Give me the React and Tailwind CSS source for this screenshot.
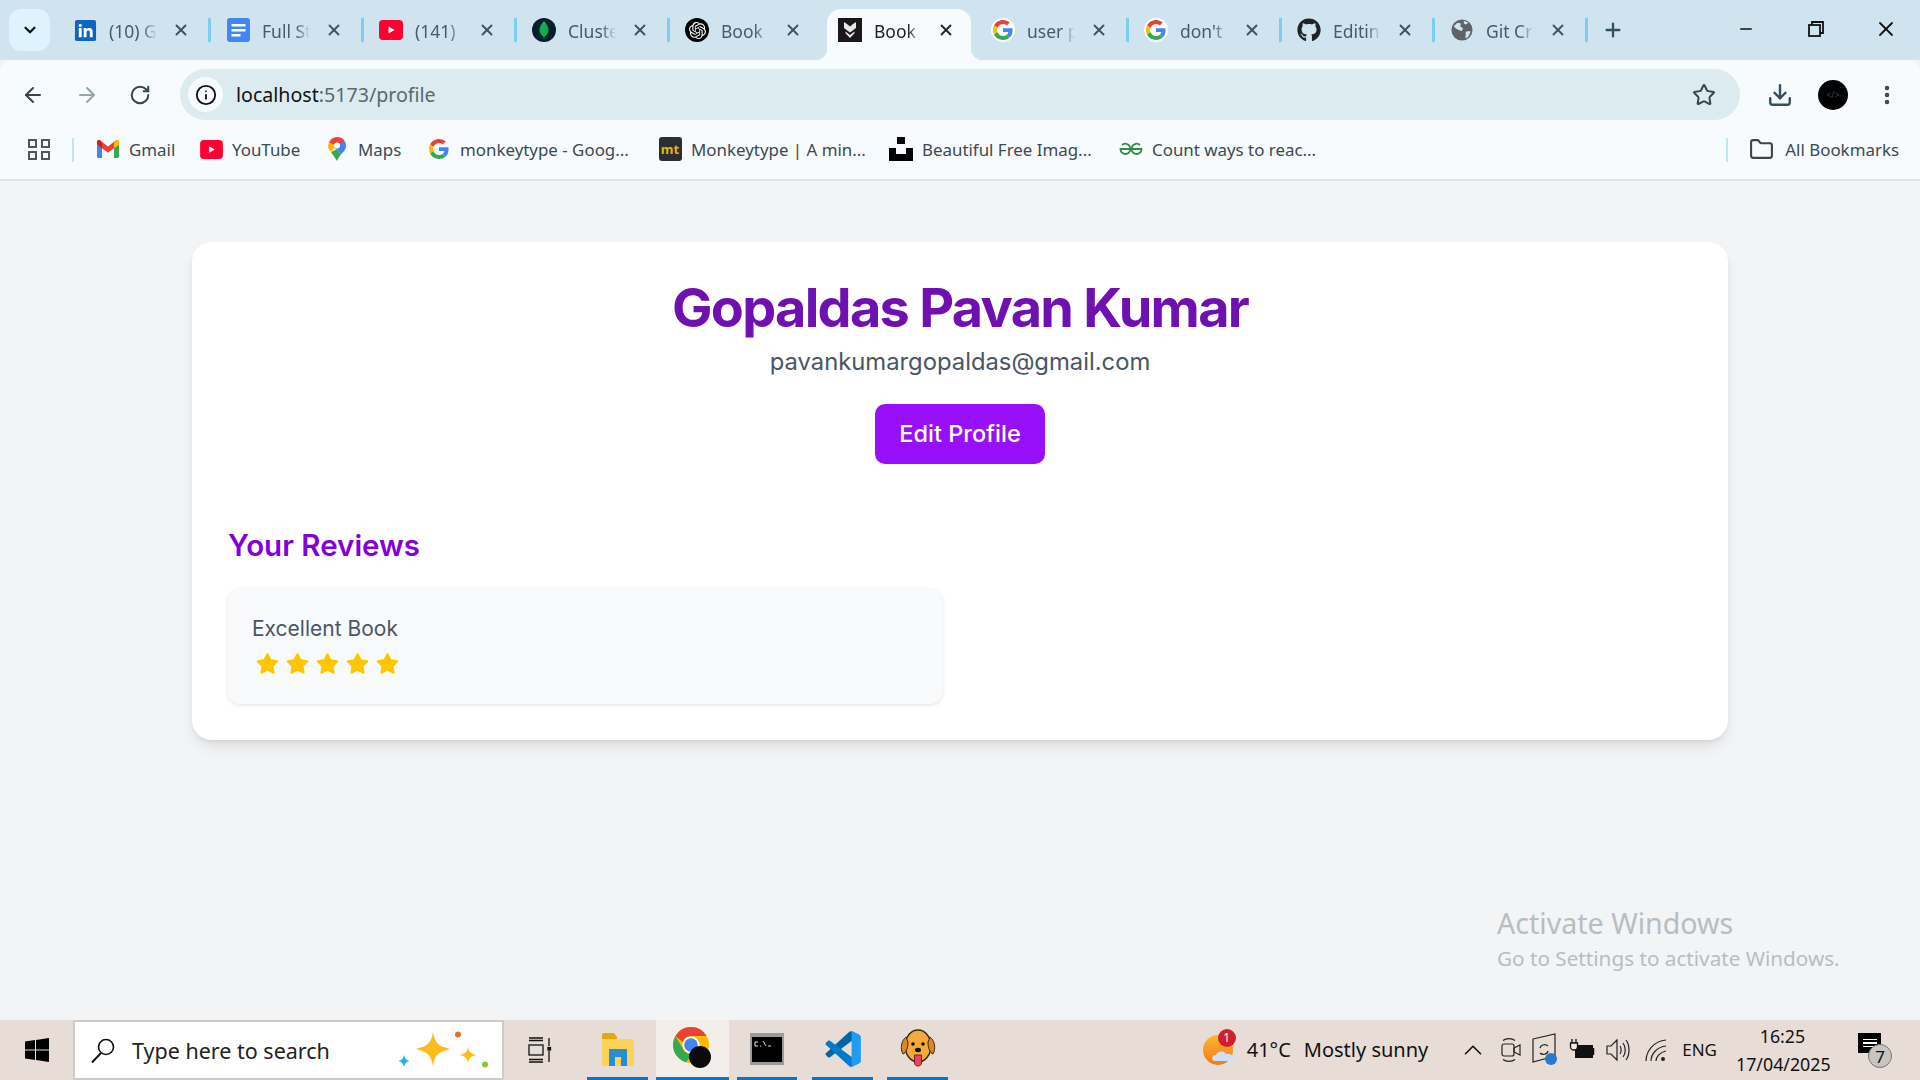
import React from 'react';
import { ArrowLeft, ArrowRight, RotateCw, Info, Star, Download, EllipsisVertical, Plus, X, ChevronDown, ChevronUp, Minus, Folder } from 'lucide-react';
import { FaGithub, FaStar } from 'react-icons/fa';
import { SiOpenai } from 'react-icons/si';

const GoogleG = ({ size = 24 }) => (
    <svg width={size} height={size} viewBox="0 0 48 48">
        <path fill="#EA4335" d="M24 9.5c3.5 0 6.7 1.2 9.2 3.6l6.9-6.9C35.9 2.4 30.5 0 24 0 14.6 0 6.5 5.4 2.6 13.2l8 6.2C12.5 13.6 17.800 9.500 24 9.500z" />
        <path fill="#4285F4" d="M46.900 24.500c0-1.600-.1-3.100-.4-4.500H24v9h12.900c-.6 3-2.200 5.500-4.700 7.200l7.700 6c4.400-4.200 7-10.300 7-17.700z" />
        <path fill="#FBBC05" d="M10.500 28.600c-.5-1.400-.8-3-.8-4.600s.3-3.200.8-4.600l-8-6.200C.9 16.500 0 20.100 0 24s.9 7.500 2.600 10.800l7.900-6.200z" />
        <path fill="#34A853" d="M24 48c6.500 0 11.900-2.100 15.900-5.800l-7.700-6c-2.200 1.400-4.900 2.300-8.200 2.300-6.200 0-11.500-4.200-13.400-9.800l-8 6.200C6.500 42.600 14.600 48 24 48z" />
    </svg>
);

const GoogleBadge = () => (
    <span className="flex w-6 h-6 rounded-full bg-white items-center justify-center">
        <GoogleG size={20} />
    </span>
);

const LinkedInIcon = () => (
    <svg width="23" height="23" viewBox="0 0 24 24">
        <rect x="1" y="1" width="22" height="22" rx="2" fill="#0a66c2" />
        <path fill="#fff" d="M5 9.500h3V19H5zM6.500 5a1.700 1.700 0 1 1 0 3.400 1.700 1.700 0 0 1 0-3.400zM10 9.500h2.900v1.300c.5-.9 1.600-1.500 3-1.500 2.700 0 3.600 1.700 3.600 4.300V19h-3v-4.700c0-1.200-.2-2.400-1.600-2.400s-1.800 1.100-1.800 2.300V19h-3z" />
    </svg>
);

const DocsIcon = () => (
    <svg width="24" height="24" viewBox="0 0 24 24">
        <rect x="1" y="0" width="23" height="24" rx="3" fill="#4285f4" />
        <path fill="#fff" d="M5.500 6h14v2.500h-14zM5.500 11h14v2.500h-14zM5.500 16h9v2.500h-9z" />
    </svg>
);

const YouTubeIcon = ({ w = 24, h = 20 }) => (
    <svg width={w} height={h} viewBox="0 0 24 20">
        <rect width="24" height="20" rx="4" fill="#ff0033" />
        <path fill="#fff" d="M9.500 6.500l6 3.500-6 3.500z" />
    </svg>
);

const MongoIcon = () => (
    <svg width="24" height="24" viewBox="0 0 24 24">
        <circle cx="12" cy="12" r="12" fill="#02212b" />
        <path fill="#13aa52" d="M12 3c2.800 3 4.500 6 4.500 9 0 3.500-2.300 5.500-3.900 6.500l-.3 2.500h-.6l-.3-2.500C9.800 17.500 7.500 15.500 7.500 12c0-3 1.700-6 4.500-9z" />
    </svg>
);

const OpenAiIcon = () => (
    <span className="flex w-6 h-6 rounded-full bg-black items-center justify-center text-white">
        <SiOpenai size={17} />
    </span>
);

const BookIcon = () => (
    <svg width="24" height="24" viewBox="0 0 24 24">
        <rect width="24" height="24" fill="#1c1719" />
        <path fill="#e8e8e8" d="M6 4l3 2 3 2.500L15 6l3-2v6l-6 4.500L6 10zM7.500 13.500l4.500 3.500 4.500-3.500v1.700L12 20l-4.500-4.800z" />
    </svg>
);

const GithubIcon = () => <FaGithub size={24} className="text-[#1f2328]" />;

const GlobeIcon = () => (
    <svg width="22" height="24" viewBox="0 0 24 24">
        <circle cx="12" cy="12" r="11.500" fill="#5f6368" />
        <path fill="#cfe4ef" d="M3 8l4-4 4 1-1 3 3 2-1 3-4-1-3-2zM16 14l4-1 1.500 1-3 6-3 1 .5-3zM14 2l5 2-3 2-2-1z" />
    </svg>
);

const GmailIcon = () => (
    <svg width="22" height="18" viewBox="0 0 22 18">
        <path fill="#4285f4" d="M0 4.500V16.500c0 .8.700 1.500 1.500 1.500H5V8z" />
        <path fill="#34a853" d="M17 8v10h3.500c.8 0 1.500-.7 1.500-1.500V4.500z" />
        <path fill="#ea4335" d="M0 2.200C0 .5 2 -.5 3.300.5L11 6.500 18.700.5C20 -.5 22 .5 22 2.200V4.500L17 8.200 11 12.700 5 8.200 0 4.500z" />
        <path fill="#fbbc04" d="M17 2.500V8.200l5-3.700V2.200c0-1.700-2-2.700-3.300-1.700z" />
        <path fill="#c5221f" d="M5 2.500V8.200L0 4.500V2.200C0 .5 2-.5 3.300.5z" />
    </svg>
);

const MapsIcon = () => (
    <svg width="18" height="24" viewBox="0 0 18 24">
        <path fill="#34a853" d="M3 15l6 9c1-2.500 2.500-4.500 4-6.500L9 12z" />
        <path fill="#fbbc04" d="M1 5.500C.3 6.700 0 7.800 0 9c0 2.500 1.500 4.300 3 6l6-7z" />
        <path fill="#4285f4" d="M9 12c-1.700 0-3-1.300-3-3l5-6 5.500.9C17.500 5.300 18 7 18 9c0 3.500-2.700 6-5 8.500z" />
        <path fill="#ea4335" d="M1 5.500C2.500 2.200 5.500 0 9 0c3.300 0 6 1.500 7.500 3.900L9 9z" />
        <circle cx="9" cy="8.500" r="3" fill="#fff" />
    </svg>
);

const UnsplashIcon = () => (
    <svg width="24" height="24" viewBox="0 0 24 24">
        <path fill="#000" d="M8 0h8v7H8zM0 11h7v6h10v-6h7v13H0z" />
    </svg>
);

const GfgIcon = () => (
    <svg width="24" height="14" viewBox="0 0 24 14" fill="none" stroke="#2f8d46" strokeWidth="1.800">
        <path d="M12 7h10.500a5 5 0 0 1-9.300 2.500 5 5 0 0 1 0-5A5 5 0 0 1 21 3" />
        <path d="M12 7H1.500a5 5 0 0 0 9.300 2.500 5 5 0 0 0 0-5A5 5 0 0 0 3 3" />
    </svg>
);

const WinIcon = () => (
    <svg width="24" height="24" viewBox="0 0 24 24">
        <path fill="#000" d="M0 3.500l10-1.400v9.400H0zM11 2l13-2v11.500H11zM0 12.500h10v9.400L0 20.500zM11 12.500h13V24l-13-2z" />
    </svg>
);

const SearchGlass = () => (
    <svg width="25" height="25" viewBox="0 0 25 25" fill="none" stroke="#111" strokeWidth="1.600">
        <circle cx="16" cy="9" r="7.500" />
        <path d="M11 15L2 24.500" strokeWidth="2" />
    </svg>
);

const SparkleIcon = () => (
    <svg width="96" height="40" viewBox="0 0 96 40">
        <path fill="#fcbc1c" d="M37 2c2 11 5 14 17.500 17C42 22 39 25 37 36c-2-11-5-14-17.500-17C32 16 35 13 37 2z" />
        <path fill="#fcbc1c" d="M72 17c1 5 3 7 8.500 8-5.500 1-7.500 3-8.500 8-1-5-3-7-8.500-8 5.500-1 7.500-3 8.500-8z" />
        <path fill="#29aef0" d="M8 25c1 3.500 2 5 5.500 6-3.500 1-4.500 2.500-5.500 6-1-3.500-2-5-5.500-6 3.500-1 4.500-2.500 5.500-6z" />
        <circle cx="62" cy="4.500" r="3" fill="#f26a2c" />
        <circle cx="89" cy="34.500" r="3" fill="#8cc63f" />
    </svg>
);

const TaskViewIcon = () => (
    <svg width="24" height="26" viewBox="0 0 24 26" fill="none" stroke="#111" strokeWidth="1.300">
        <path d="M1 1h14M1 25h14M1 3.500h14M1 22.500h14" />
        <rect x="1" y="8" width="14" height="10" />
        <path d="M21 1v8M21 14v11" />
        <rect x="20" y="10.500" width="2.500" height="2.500" fill="#111" />
    </svg>
);

const ExplorerIcon = () => (
    <svg width="32" height="34" viewBox="0 0 32 34">
        <path fill="#e2a80d" d="M0 3c0-1 1-2 2-2h10l3 4v6H0z" />
        <path fill="#fbd35a" d="M0 7h30c1 0 2 1 2 2v23c0 1-1 2-2 2H2c-1 0-2-1-2-2z" />
        <path fill="#2a8bd6" d="M7 17h18v17h-6v-9h-6v9H7z" />
    </svg>
);

const ChromeIcon = () => (
    <svg width="46" height="46" viewBox="0 0 46 46" className="ml-[4px]">
        <circle cx="19" cy="19" r="18" fill="#fbbc04" />
        <path fill="#ea4335" d="M3.400 10A18 18 0 0 1 34.600 10H19a9 9 0 0 0-8.500 6z" />
        <path fill="#34a853" d="M3.400 10L11 23a9 9 0 0 0 9 5l-6 8.300A18 18 0 0 1 3.400 10z" />
        <circle cx="19" cy="19" r="8.500" fill="#fff" />
        <circle cx="19" cy="19" r="6.800" fill="#4285f4" />
        <circle cx="28" cy="31" r="11" fill="#0b0b0b" />
    </svg>
);

const TerminalIcon = () => (
    <svg width="34" height="32" viewBox="0 0 34 32">
        <rect width="34" height="32" fill="#9a9a9a" />
        <rect x="2" y="4" width="30" height="25" fill="#000" />
        <path stroke="#ddd" strokeWidth="1" fill="none" d="M5 9h3M5 9v4h3M10 13h1M13 8l3 5M18 13h3" />
    </svg>
);

const VsCodeIcon = () => (
    <svg width="36" height="36" viewBox="0 0 100 100">
        <path fill="#0065a9" d="M96 11L75 1c-2.500-1-5.400-.5-7.300 1.400L3 61c-2 1.800-2 4.800 0 6.600l5.500 5c1.500 1.400 3.800 1.500 5.400.3L96 11z" />
        <path fill="#007acc" d="M96 89L75 99c-2.500 1-5.400.5-7.300-1.400L3 39c-2-1.800-2-4.800 0-6.600l5.500-5c1.500-1.400 3.800-1.500 5.400-.3L96 89z" />
        <path fill="#1f9cf0" d="M75 99c-2.500 1.200-5.400.7-7.300-1.300 2.400 2.400 6.300.7 6.300-2.600V4.900c0-3.300-4-5-6.300-2.600C69.600.3 72.500-.2 75 1l21 10c2.200 1 3.600 3.200 3.600 5.600v66.800c0 2.400-1.400 4.600-3.600 5.600z" />
    </svg>
);

const DogIcon = () => (
    <svg width="36" height="40" viewBox="0 0 36 40">
        <ellipse cx="18" cy="17" rx="13" ry="16" fill="#f4a93c" stroke="#3d2a12" strokeWidth="1.500" />
        <path fill="#d98a26" stroke="#3d2a12" d="M6 8C1 12 0 20 3 25c3-1 5-6 5-12zM30 8c5 4 6 12 3 17-3-1-5-6-5-12z" />
        <circle cx="13" cy="15" r="1.800" fill="#111" />
        <circle cx="23" cy="15" r="1.800" fill="#111" />
        <ellipse cx="18" cy="21" rx="3" ry="2.200" fill="#111" />
        <path fill="#e8455a" stroke="#7a1f2b" d="M14.500 26h7v8c0 4-7 4-7 0z" />
    </svg>
);

const WeatherIcon = () => (
    <svg width="32" height="32" viewBox="0 0 32 32">
        <defs>
            <linearGradient id="sun" x1="0" y1="0" x2="0" y2="1">
                <stop offset="0" stopColor="#fbb72c" />
                <stop offset="1" stopColor="#f27a1a" />
            </linearGradient>
        </defs>
        <circle cx="15" cy="16" r="15" fill="url(#sun)" />
        <path fill="#cfe0f6" d="M12 27c-4 0-4-6 1-6 1-4 8-5 10-1 5-1 9 3 7 7z" />
    </svg>
);

const MeetIcon = () => (
    <svg width="20" height="26" viewBox="0 0 20 26" fill="none" stroke="#222" strokeWidth="1.200">
        <rect x="1" y="7" width="12" height="12" rx="2" />
        <path d="M13 11l6-3v10l-6-3zM2 3.500c3-2.500 9-2.500 12 0M2 22.500c3 2.500 9 2.500 12 0" />
    </svg>
);

const SyncIcon = () => (
    <svg width="28" height="34" viewBox="0 0 28 34">
        <path fill="none" stroke="#222" strokeWidth="1.200" d="M1 6l22-5v22L1 29zM8 15c1-4 6-4 8-2M16 18c-1 4-6 4-8 2" />
        <circle cx="19" cy="26" r="6" fill="#2a78c8" />
    </svg>
);

const BatteryIcon = () => (
    <svg width="26" height="24" viewBox="0 0 26 24">
        <rect x="6" y="7" width="18" height="13" fill="#111" />
        <path d="M24.500 10v7" stroke="#111" strokeWidth="1.500" />
        <path d="M3 1v4M7 1v4M1.500 5h7v4c0 2-2 3-3.500 3s-3.500-1-3.500-3z" stroke="#111" strokeWidth="1.300" fill="#f0ebe6" />
    </svg>
);

const VolumeIcon = () => (
    <svg width="24" height="24" viewBox="0 0 24 24" fill="none" stroke="#222" strokeWidth="1.200">
        <path d="M1 8h4l6-6v20l-6-6H1zM14 8c1.500 2 1.500 6 0 8M17 5c3 4 3 10 0 14M20 2c4 5 4 15 0 20" />
    </svg>
);

const WifiIcon = () => (
    <svg width="22" height="24" viewBox="0 0 22 24" fill="none" stroke="#222" strokeWidth="1.200">
        <path d="M1 23C1 13 9 3 21 2M6 23c0-7 6-14 15-15M11 23c0-4 4-9 10-10" />
        <circle cx="18" cy="21" r="2" fill="#222" stroke="none" />
    </svg>
);

const tabs = [
    { title: '(10) G', icon: <LinkedInIcon /> },
    { title: 'Full St', icon: <DocsIcon /> },
    { title: '(141)', icon: <YouTubeIcon /> },
    { title: 'Cluste', icon: <MongoIcon /> },
    { title: 'Book', icon: <OpenAiIcon />, noSep: true },
    { title: 'Book', icon: <BookIcon />, active: true, noSep: true },
    { title: 'user p', icon: <GoogleBadge /> },
    { title: "don't", icon: <GoogleBadge /> },
    { title: 'Editing', icon: <GithubIcon /> },
    { title: 'Git Cr', icon: <GlobeIcon /> },
];

const bookmarks = [
    { label: 'Gmail', icon: <GmailIcon />, w: 'w-[103px]' },
    { label: 'YouTube', icon: <YouTubeIcon w={23} h={19} />, w: 'w-[126px]' },
    { label: 'Maps', icon: <MapsIcon />, w: 'w-[102px]' },
    { label: 'monkeytype - Goog...', icon: <GoogleG size={20} />, w: 'w-[231px]' },
    { label: 'Monkeytype | A min...', icon: <span className="flex w-[23px] h-[24px] rounded-[3px] bg-[#2c2e31] text-[#e2b714] text-[13px] font-bold items-center justify-center">mt</span>, w: 'w-[231px]' },
    { label: 'Beautiful Free Imag...', icon: <UnsplashIcon />, w: 'w-[230px]' },
    { label: 'Count ways to reac...', icon: <GfgIcon />, w: 'w-auto' },
];

const TaskItem = ({ w, className = '', children }) => (
    <div className={`${w} h-[60px] flex items-center justify-center border-b-[3px] border-[#0078d4] ${className}`}>
        {children}
    </div>
);

const App = () => {
    return (
        <div className='h-screen flex flex-col overflow-hidden font-["Noto_Sans",sans-serif] bg-[#f3f4f6]'>
            {/* Tab strip */}
            <div className="h-[60px] flex items-start bg-[#cfe4ef] shrink-0">
                <button className="ml-[9px] mt-[9px] w-[41px] h-[42px] rounded-[12px] bg-[#def3fd] flex items-center justify-center shrink-0">
                    <ChevronDown size={18} strokeWidth={3} className="text-[#111]" />
                </button>
                <div className="ml-2 flex items-end h-[60px]">
                    {tabs.map((tab, i) => (
                        <div key={i} className="relative w-[153px] h-[51px] flex items-center shrink-0">
                            {tab.active && (
                                <>
                                    <div className="absolute left-[4px] right-[5px] inset-y-0 bg-[#f7fbfd] rounded-t-[14px]" />
                                    <span className="absolute left-[-8px] bottom-0 w-3 h-3 bg-[radial-gradient(circle_at_0_0,#cfe4ef_12px,#f7fbfd_12.500px)]" />
                                    <span className="absolute right-[-7px] bottom-0 w-3 h-3 bg-[radial-gradient(circle_at_100%_0,#cfe4ef_12px,#f7fbfd_12.500px)]" />
                                </>
                            )}
                            <div className={`relative w-full h-6 mb-[9px] flex items-center pl-[15px] ${tab.noSep ? '' : 'border-r-[3px] border-[#7dcdee]'}`}>
                                <span className="w-6 flex justify-center shrink-0">{tab.icon}</span>
                                <span className={`ml-3 mt-[2px] w-[48px] overflow-hidden whitespace-nowrap text-[17.500px] [mask-image:linear-gradient(to_right,black_70%,transparent)] ${tab.active ? 'text-[#1f1f1f]' : 'text-[#4a5a66]'}`}>
                                    {tab.title}
                                </span>
                                <X size={18} strokeWidth={2.500} className={`ml-[15px] shrink-0 ${tab.active ? 'text-[#1f2a30]' : 'text-[#41535f]'}`} />
                            </div>
                        </div>
                    ))}
                    <div className="h-[51px] flex items-center pl-[14px]">
                        <Plus size={22} strokeWidth={2.500} className="mb-[9px] text-[#33505f]" />
                    </div>
                </div>
                {/* Window controls */}
                <div className="ml-auto h-[60px] flex items-center pb-[2px]">
                    <div className="w-[70px] flex justify-center"><Minus size={18} strokeWidth={2} className="text-[#111]" /></div>
                    <div className="w-[70px] flex justify-center">
                        <svg width="16" height="16" viewBox="0 0 16 16" fill="none" stroke="#111" strokeWidth="1.800">
                            <rect x="1" y="4" width="11" height="11" />
                            <path d="M4 4V1h11v11h-3" />
                        </svg>
                    </div>
                    <div className="w-[69px] flex justify-center"><X size={24} strokeWidth={1.800} className="text-[#111]" /></div>
                </div>
            </div>

            {/* Toolbar */}
            <div className="h-[60px] bg-[#f7fbfd] rounded-t-[12px] flex items-end shrink-0">
                <div className="h-[51px] flex items-center pl-[21px] w-[180px] gap-[30px]">
                    <ArrowLeft size={24} strokeWidth={2} className="text-[#37474f]" />
                    <ArrowRight size={24} strokeWidth={2} className="text-[#9aa5ab]" />
                    <RotateCw size={22} strokeWidth={2.200} className="text-[#37474f]" />
                </div>
                <div className="w-[1560px] h-[51px] rounded-full bg-[#dcebef] flex items-center pl-[8px] pr-[24px]">
                    <span className="w-[35px] h-[35px] rounded-full bg-[#f7fbfd] flex items-center justify-center">
                        <Info size={22} strokeWidth={2} className="text-[#111]" />
                    </span>
                    <span className="ml-[13px] text-[19.600px] text-[#5a6870]">
                        <span className="text-[#111]">localhost</span>:5173/profile
                    </span>
                    <Star size={24} strokeWidth={2} className="ml-auto text-[#37474f]" />
                </div>
                <div className="flex-1 h-[51px] flex items-center">
                    <Download size={26} strokeWidth={2.200} className="ml-[27px] text-[#33505f]" />
                    <span className="ml-[25px] w-[30px] h-[30px] rounded-full bg-black flex items-center justify-center text-[9px] text-[#33505f]">&lt;/&gt;</span>
                    <EllipsisVertical size={24} strokeWidth={2.500} className="ml-[27px] text-[#37474f]" />
                </div>
            </div>

            {/* Bookmarks bar */}
            <div className="h-[61px] bg-[#f7fbfd] border-b-2 border-[#dce5ea] flex items-center shrink-0">
                <div className="ml-[28px] w-[22px] grid grid-cols-2 gap-[3px]">
                    <span className="w-[9px] h-[9px] border-2 border-[#555]" />
                    <span className="w-[9px] h-[9px] border-2 border-[#555]" />
                    <span className="w-[9px] h-[9px] border-2 border-[#555]" />
                    <span className="w-[9px] h-[9px] border-2 border-[#555]" />
                </div>
                <span className="ml-[22px] w-[2px] h-[24px] bg-[#bfe4f5]" />
                <div className="ml-[22px] flex items-center">
                    {bookmarks.map((b) => (
                        <div key={b.label} className={`flex items-center ${b.w}`}>
                            <span className="w-6 flex justify-center shrink-0">{b.icon}</span>
                            <span className="ml-[9px] text-[16.900px] text-[#3c4a52] whitespace-nowrap">{b.label}</span>
                        </div>
                    ))}
                </div>
                <span className="ml-auto w-[2px] h-[24px] bg-[#bfe4f5]" />
                <Folder size={25} strokeWidth={2} className="ml-[21px] text-[#444]" />
                <span className="ml-[11px] mr-[21px] text-[16.900px] text-[#3c4a52]">All Bookmarks</span>
            </div>

            {/* Page */}
            <main className="relative flex-1 bg-[#f3f4f6] pt-[61px] font-['Inter',sans-serif]">
                <div className="mx-auto w-[1536px] h-[498px] bg-white rounded-[20px] shadow-[0_8px_16px_-4px_rgba(0,0,0,0.12),0_3px_6px_-3px_rgba(0,0,0,0.1)] px-9 pt-[28px]">
                    <div className="flex flex-col items-center">
                        <h1 className="text-[54px] leading-[75px] font-bold tracking-[-1.700px] text-[#6e11b0]">Gopaldas Pavan Kumar</h1>
                        <p className="text-[23.800px] leading-[32px] text-[#4a5565] mt-[1px]">pavankumargopaldas@gmail.com</p>
                        <button className="mt-[26px] w-[170px] h-[60px] rounded-[10px] bg-[#9810fa] text-white text-[23.500px] font-medium">Edit Profile</button>
                    </div>
                    <h2 className="mt-[62px] text-[29.500px] leading-[38px] font-semibold text-[#8200db]">Your Reviews</h2>
                    <div className="mt-[25px] w-[714px] h-[115px] rounded-[12px] bg-[#f9fafb] shadow-[0_1px_4px_rgba(0,0,0,0.12)] pl-6 pt-[26px]">
                        <p className="text-[21px] leading-[28px] text-[#4a5565]">Excellent Book</p>
                        <div className="mt-[9px] flex gap-[7px] text-[#ffc700] pl-1">
                            {[0, 1, 2, 3, 4].map((s) => (
                                <FaStar key={s} size={23} />
                            ))}
                        </div>
                    </div>
                </div>
                {/* Activate Windows watermark */}
                <div className="absolute left-[1497px] top-[723px] text-[#b9bcc0] font-['Noto_Sans',sans-serif]">
                    <p className="text-[28.600px] leading-[38px]">Activate Windows</p>
                    <p className="mt-[2px] text-[20.700px] leading-[28px]">Go to Settings to activate Windows.</p>
                </div>
            </main>

            {/* Taskbar */}
            <div className="h-[60px] bg-[#e7dcd6] flex items-center shrink-0">
                <div className="w-[73px] flex justify-center"><WinIcon /></div>
                <div className="w-[431px] h-[60px] bg-white border-2 border-[#ccc] flex items-center pl-[15px] pr-[10px]">
                    <SearchGlass />
                    <span className="ml-[17px] mt-[2px] text-[21.500px] text-[#222]">Type here to search</span>
                    <span className="ml-auto"><SparkleIcon /></span>
                </div>
                <div className="ml-[24px] w-[24px]"><TaskViewIcon /></div>
                <div className="ml-[35px] flex h-[60px]">
                    <TaskItem w="w-[61px]"><ExplorerIcon /></TaskItem>
                    <TaskItem w="w-[73px]" className="ml-2 bg-[#f3eeea]"><ChromeIcon /></TaskItem>
                    <TaskItem w="w-[60px]" className="ml-2"><TerminalIcon /></TaskItem>
                    <TaskItem w="w-[61px]" className="ml-[15px]"><VsCodeIcon /></TaskItem>
                    <TaskItem w="w-[61px]" className="ml-[14px]"><DogIcon /></TaskItem>
                </div>
                <div className="ml-auto flex items-center h-[60px] text-[#111]">
                    <div className="relative w-[32px]">
                        <WeatherIcon />
                        <span className="absolute right-[-1px] top-[-5px] w-[18px] h-[18px] rounded-full bg-[#d0202b] text-white text-[12px] flex items-center justify-center">1</span>
                    </div>
                    <span className="ml-3 text-[20px]">41°C</span>
                    <span className="ml-[13px] text-[20px]">Mostly sunny</span>
                    <ChevronUp size={30} strokeWidth={1.300} className="ml-[30px] text-[#111]" />
                    <span className="ml-[13px]"><MeetIcon /></span>
                    <span className="ml-[11px]"><SyncIcon /></span>
                    <span className="ml-[9px]"><BatteryIcon /></span>
                    <span className="ml-[11px]"><VolumeIcon /></span>
                    <span className="ml-[15px]"><WifiIcon /></span>
                    <span className="ml-[15px] text-[17px]">ENG</span>
                    <div className="ml-[19px] w-[93px] text-center text-[17.800px] leading-[28px]">
                        <p>16:25</p>
                        <p>17/04/2025</p>
                    </div>
                    <div className="relative ml-[29px] mr-[38px] w-[24px] h-[34px]">
                        <div className="w-[23px] h-[20px] bg-black flex flex-col gap-[2px] items-center justify-center">
                            <span className="w-[14px] h-[1.500px] bg-white" />
                            <span className="w-[14px] h-[1.500px] bg-white" />
                            <span className="w-[14px] h-[1.500px] bg-white" />
                        </div>
                        <span className="absolute left-[10px] top-[11px] w-[24px] h-[24px] rounded-full bg-[#c8c4c0] border border-[#777] text-[17px] leading-none flex items-center justify-center">7</span>
                    </div>
                </div>
            </div>
        </div>
    );
};

export default App;
